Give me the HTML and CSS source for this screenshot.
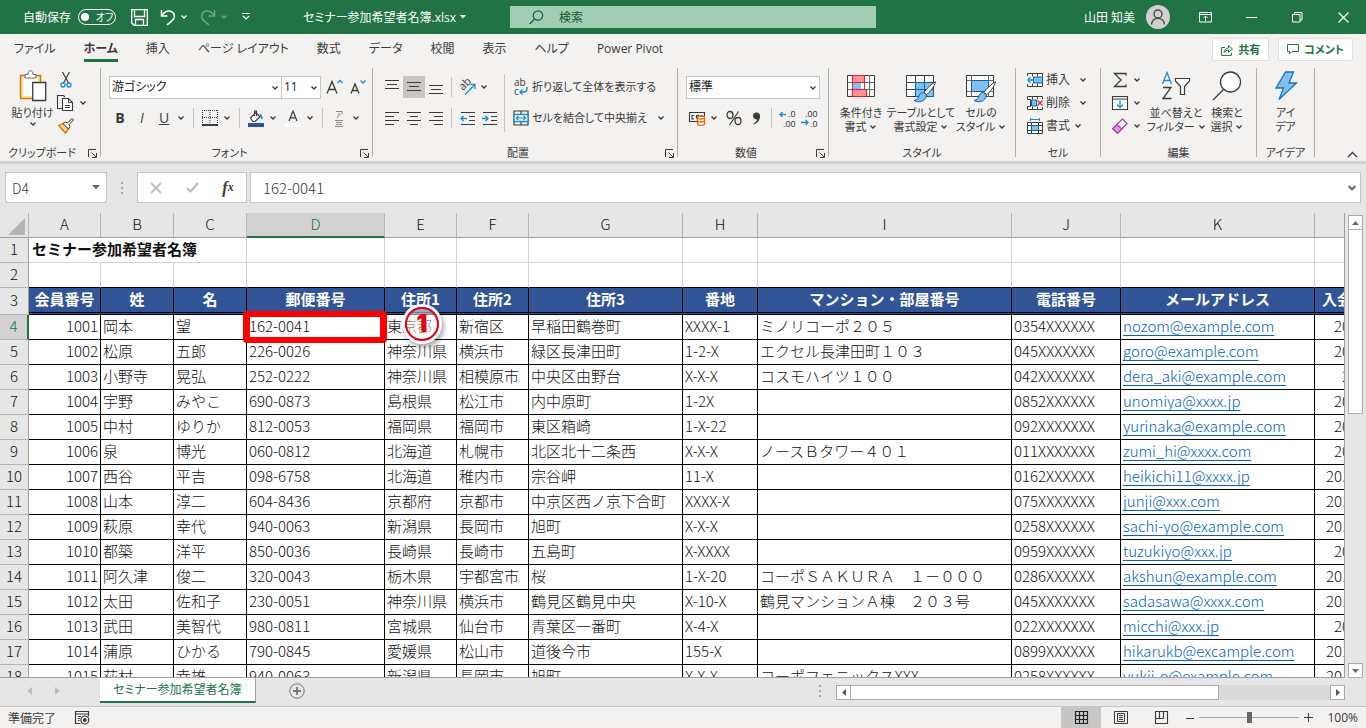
FILE: index.html
```html
<!DOCTYPE html>
<html lang="ja">
<head>
  <meta charset="UTF-8" />
  <meta name="viewport" content="width=device-width, initial-scale=1.0"/>
  <title>セミナー参加希望者名簿.xlsx</title>
  <link rel="stylesheet" href="styles.css">
</head>
<body>

  <svg class="sprite" aria-hidden="true">
    <symbol id="chev" viewBox="0 0 8 8"><path d="M1.500 2.500 4 5 6.500 2.500" fill="none" stroke="currentColor" stroke-width="1.300"/></symbol>
    <symbol id="launch" viewBox="0 0 9 9"><path d="M.5 8V.5H8M3.500 3.500 8 8M8.500 4v4.500H4" fill="none" stroke="currentColor"/></symbol>
    <symbol id="brush" viewBox="0 0 24 22"><path d="M22.500.8c-4 2-9 7-11.500 10.500l2.500 2.500C17 11 21.500 5.500 22.500.8z" fill="#fff" stroke="#3b3a39"/><path d="M10.500 11.500c-3 0-4.500 2-5 4.500-.5 2-2 3-4.500 3.500 4.500 2.500 11.500 1.500 12.500-5.500z" fill="#83beec" stroke="#0364b8"/></symbol>
  </svg>

  <header class="titlebar">
    <div class="quick">
      <span>自動保存</span>
      <button class="toggle" aria-label="自動保存"><i></i>オフ</button>
      <button class="save" aria-label="上書き保存"><svg width="17" height="17" viewBox="0 0 17 17"><path d="M.7.7h15.600v15.600H3L.7 14zM3.500.7v6.800h10V.7M4.500 16v-5.500h8V16" fill="none" stroke="#fff" stroke-width="1.300"/></svg></button>
      <button class="undo" aria-label="元に戻す"><svg width="16" height="17" viewBox="0 0 16 17"><path d="M1.500 1v6h6M1.800 6.800C4 3 7 1.500 10 2c4 .7 5.500 5 3.500 8-1.500 2.300-4 4-6.500 6" fill="none" stroke="#fff" stroke-width="1.500"/></svg></button>
      <svg class="caret"><use href="#chev"/></svg>
      <button class="redo faded" aria-label="やり直し"><svg width="16" height="17" viewBox="0 0 16 17"><path d="M14.500 1v6h-6M14.200 6.800C12 3 9 1.500 6 2 2 2.700.5 7 2.500 10 4 12.300 6.500 14 9 16" fill="none" stroke="#fff" stroke-width="1.500"/></svg></button>
      <svg class="caret faded"><use href="#chev"/></svg>
      <button class="custom" aria-label="クイック アクセス ツール バーのカスタマイズ"><svg width="8" height="8" viewBox="0 0 8 8"><path d="M0 .5h8M1 3l3 3 3-3" fill="none" stroke="#fff" stroke-width="1.200"/></svg></button>
      <span class="doc-name">セミナー参加希望者名簿.xlsx</span>
      <svg class="doc-caret" width="6" height="4" viewBox="0 0 6 4"><path d="M0 0h6L3 3.500z" fill="#fff"/></svg>
    </div>
    <label class="search">
      <svg width="15" height="15" viewBox="0 0 15 15"><circle cx="9" cy="5.500" r="4.700" fill="none" stroke="#185c37" stroke-width="1.200"/><path d="M5.500 9 .7 14" stroke="#185c37" stroke-width="1.200"/></svg>
      <input type="text" placeholder="検索" aria-label="検索">
    </label>
    <div class="window">
      <span>山田 知美</span>
      <span class="avatar"><svg width="16" height="16" viewBox="0 0 16 16"><circle cx="8" cy="5" r="4" fill="none" stroke="#444" stroke-width="1.300"/><path d="M1.500 15.500C2 11 4.500 9.300 8 9.300s6 1.700 6.500 6.200" fill="none" stroke="#444" stroke-width="1.300"/></svg></span>
      <button aria-label="リボンの表示オプション"><svg width="13" height="11" viewBox="0 0 13 11"><path d="M.5.5h12v9.500H.5zM.5 2.500h12M6.500 9V4.500M4.500 6l2-2 2 2" fill="none" stroke="#fff"/></svg></button>
      <button aria-label="最小化"><svg width="11" height="11" viewBox="0 0 11 11"><path d="M0 5.500h11" stroke="#fff"/></svg></button>
      <button aria-label="元に戻す(縮小)"><svg width="11" height="11" viewBox="0 0 11 11"><path d="M.5 2.500h7.500V10H.5zM2.500 2.500V.5H10V8H8" fill="none" stroke="#fff"/></svg></button>
      <button aria-label="閉じる"><svg width="11" height="11" viewBox="0 0 11 11"><path d="M.5.5l10 10M10.500.5l-10 10" stroke="#fff" stroke-width="1.100"/></svg></button>
    </div>
  </header>

  <nav class="tabs">
    <a href="#">ファイル</a>
    <a href="#" class="active">ホーム</a>
    <a href="#">挿入</a>
    <a href="#">ページ レイアウト</a>
    <a href="#">数式</a>
    <a href="#">データ</a>
    <a href="#">校閲</a>
    <a href="#">表示</a>
    <a href="#">ヘルプ</a>
    <a href="#">Power Pivot</a>
    <div class="share">
      <button><svg width="12" height="12" viewBox="0 0 12 12"><path d="M4 3.500H.6v7.900h9.800V8.500M3 8.500C3.500 5.500 5 4 7.500 4V1.500l4 3.500-4 3.300V6C5.500 6 4 6.800 3 8.500z" fill="none" stroke="#217346"/></svg>共有</button>
      <button><svg width="12" height="11" viewBox="0 0 12 11"><path d="M.5.5h11v7H5L2.500 10V7.500h-2z" fill="none" stroke="#217346"/></svg>コメント</button>
    </div>
  </nav>

  <section class="ribbon">
    <div class="group clipboard">
      <div class="body">
        <button class="tall">
          <svg width="28" height="32" viewBox="0 0 28 32"><path d="M1.500 5.500h20v23h-20z" fill="#ffe0a0" stroke="#d97706" stroke-width="1.500"/><path d="M4 8h15v18H4z" fill="#fff"/><path d="M6 8V4.500h3C9 2 10 .8 11.500.8S14 2 14 4.500h3V8z" fill="#fff" stroke="#6b6966"/><path d="M13.700 12.500h13v18h-13z" fill="#fff" stroke="#3b3a39" stroke-width="1.300"/></svg>
          <span>貼り付け</span>
          <svg class="caret"><use href="#chev"/></svg>
        </button>
        <div class="stack">
          <button aria-label="切り取り"><svg width="16" height="16" viewBox="0 0 16 16"><path d="M4.500 0 10.500 11M11.500 0l-6 11" stroke="#3b3a39" stroke-width="1.200"/><circle cx="5" cy="13" r="2" fill="none" stroke="#1e8bcd" stroke-width="1.300"/><circle cx="11" cy="13" r="2" fill="none" stroke="#1e8bcd" stroke-width="1.300"/></svg></button>
          <div class="split"><button aria-label="コピー"><svg width="16" height="16" viewBox="0 0 16 16"><path d="M5.500 13.500h-5V.5h6l1.500 1.500" fill="none" stroke="#3b3a39" stroke-width="1.100"/><path d="M5.500 3.500h6l4 4v8h-10z" fill="#fff" stroke="#3b3a39" stroke-width="1.100"/><path d="M11.500 3.500v4h4M8 10.500h5M8 12.500h5" fill="none" stroke="#3b3a39"/></svg></button><button class="drop" aria-label="コピーのオプション"><svg class="caret"><use href="#chev"/></svg></button></div>
          <button aria-label="書式のコピー/貼り付け"><svg width="16" height="16" viewBox="0 0 16 16"><path d="M.8 7.500 5 5.500l5.500 5.500-3 4.200z" fill="#ffd590" stroke="#d97706" stroke-width="1.300"/><path d="M3 10.500l4 4" stroke="#d97706"/><path d="M5 5.500 7.500 4l2 1 4.500-4.500 1.500 1.500L11 6.500l1 2L10.500 11z" fill="#fff" stroke="#3b3a39"/></svg></button>
        </div>
      </div>
      <div class="caption"><span>クリップボード</span><button aria-label="クリップボードの詳細"><svg width="9" height="9"><use href="#launch"/></svg></button></div>
    </div>
    <div class="divider"></div>

    <div class="group font">
      <div class="body rows">
        <div class="row">
          <span class="combo font-name"><select aria-label="フォント名"><option>游ゴシック</option></select><svg class="caret"><use href="#chev"/></svg></span>
          <span class="combo font-size"><select aria-label="フォント サイズ"><option>11</option></select><svg class="caret"><use href="#chev"/></svg></span>
          <button class="tool grow" aria-label="フォント サイズの拡大"><svg width="17" height="16" viewBox="0 0 17 16"><path d="M1 14.500 6 2.500l5 12M2.800 10.500h6.400" fill="none" stroke="#3b3a39" stroke-width="1.300"/><path d="M11.500 4 14 1.500 16.500 4" fill="none" stroke="#1e8bcd" stroke-width="1.300"/></svg></button>
          <button class="tool" aria-label="フォント サイズの縮小"><svg width="17" height="16" viewBox="0 0 17 16"><path d="M2 14.500 6 5l4 9.500M3.500 11.500h5" fill="none" stroke="#3b3a39" stroke-width="1.300"/><path d="M11.500 1.500 14 4l2.500-2.500" fill="none" stroke="#1e8bcd" stroke-width="1.300"/></svg></button>
        </div>
        <div class="row">
          <button class="tool bold">B</button>
          <button class="tool italic">I</button>
          <button class="tool under">U</button>
          <button class="drop" aria-label="下線の種類"><svg class="caret"><use href="#chev"/></svg></button>
          <i class="sep"></i>
          <button class="tool" aria-label="罫線"><svg width="16" height="16" viewBox="0 0 16 16"><path d="M.5 0v14M8 0v14M15.500 0v14M0 .5h16M0 7.500h16" stroke="#3b3a39" stroke-dasharray="1 1"/><path d="M0 15h16" stroke="#000" stroke-width="1.500"/></svg></button>
          <button class="drop" aria-label="罫線の種類"><svg class="caret"><use href="#chev"/></svg></button>
          <i class="sep"></i>
          <button class="tool" aria-label="塗りつぶしの色"><svg width="16" height="17" viewBox="0 0 16 17"><path d="M2.500 8 8 2.500l4 4.500-5 4.500H5zM6.500 6V1.500c0-1 2-1 2 0V6" fill="#fff" stroke="#3b3a39" stroke-width="1.200"/><path d="M11.500 3.500c2.500.5 3.500 2.500 3 6.500-1.500-1-2-3-2.500-5z" fill="#1e8bcd"/><path d="M0 13h16v4H0z" fill="#305496"/></svg></button>
          <button class="drop" aria-label="塗りつぶしの色の選択"><svg class="caret"><use href="#chev"/></svg></button>
          <button class="tool gap" aria-label="フォントの色"><svg width="16" height="17" viewBox="0 0 16 17"><path d="M4 11 8 1l4 10M5.300 7.800h5.400" fill="none" stroke="#3b3a39" stroke-width="1.200"/><path d="M0 13h16v4H0z" fill="#fff"/></svg></button>
          <button class="drop" aria-label="フォントの色の選択"><svg class="caret"><use href="#chev"/></svg></button>
          <i class="sep"></i>
          <button class="tool ruby" aria-label="ふりがなの表示"><svg width="12" height="17" viewBox="0 0 12 17"><path d="M3 1.500h6.500C9.500 3 8.500 4 7.300 4.700M6 3c0 2.500-.5 4-2.500 5" fill="none" stroke="#8a8886"/><path d="M2 10.500h8M3 12.500h6M3 14.500h6M2 16.500h8" stroke="#8a8886"/></svg></button>
          <button class="drop" aria-label="ふりがなのオプション"><svg class="caret"><use href="#chev"/></svg></button>
        </div>
      </div>
      <div class="caption"><span>フォント</span><button aria-label="フォントの設定"><svg width="9" height="9"><use href="#launch"/></svg></button></div>
    </div>
    <div class="divider"></div>

    <div class="group align">
      <div class="body">
        <div class="rows">
          <div class="row">
            <button class="tool" aria-label="上揃え"><svg width="14" height="14" viewBox="0 0 14 14"><path d="M0 .5h14M2 4.500h10M0 8.500h14" stroke="#3b3a39"/></svg></button>
            <button class="tool on" aria-label="上下中央揃え"><svg width="14" height="14" viewBox="0 0 14 14"><path d="M0 2.500h14M2 6.500h10M0 10.500h14" stroke="#3b3a39"/></svg></button>
            <button class="tool" aria-label="下揃え"><svg width="14" height="14" viewBox="0 0 14 14"><path d="M0 5.500h14M2 9.500h10M0 13.500h14" stroke="#3b3a39"/></svg></button>
            <i class="sep"></i>
            <button class="tool orient" aria-label="方向"><svg width="17" height="17" viewBox="0 0 17 17"><text transform="translate(4 12) rotate(-45)" font-size="11" fill="#3b3a39">ab</text><path d="M6 15.500 15.500 6M11.500 5.500h4.500V10" fill="none" stroke="#1e8bcd" stroke-width="1.300"/></svg></button>
            <button class="drop" aria-label="方向の選択"><svg class="caret"><use href="#chev"/></svg></button>
          </div>
          <div class="row">
            <button class="tool" aria-label="左揃え"><svg width="14" height="14" viewBox="0 0 14 14"><path d="M0 1.500h14M0 5.500h9M0 9.500h14M0 13.500h9" stroke="#3b3a39"/></svg></button>
            <button class="tool" aria-label="中央揃え"><svg width="14" height="14" viewBox="0 0 14 14"><path d="M0 1.500h14M3 5.500h8M0 9.500h14M3 13.500h8" stroke="#3b3a39"/></svg></button>
            <button class="tool" aria-label="右揃え"><svg width="14" height="14" viewBox="0 0 14 14"><path d="M0 1.500h14M5 5.500h9M0 9.500h14M5 13.500h9" stroke="#3b3a39"/></svg></button>
            <i class="sep"></i>
            <button class="tool" aria-label="インデントを減らす"><svg width="15" height="14" viewBox="0 0 15 14"><path d="M1 1.500h14M9 5.500h6M9 9.500h6M1 13.500h14" stroke="#3b3a39"/><path d="M7 7.500H1M3.500 5 1 7.500 3.500 10" fill="none" stroke="#1e8bcd" stroke-width="1.400"/></svg></button>
            <button class="tool" aria-label="インデントを増やす"><svg width="15" height="14" viewBox="0 0 15 14"><path d="M1 1.500h14M9 5.500h6M9 9.500h6M1 13.500h14" stroke="#3b3a39"/><path d="M0 7.500h6M3.500 5 6 7.500 3.500 10" fill="none" stroke="#1e8bcd" stroke-width="1.400"/></svg></button>
          </div>
        </div>
        <i class="sep long"></i>
        <div class="rows">
          <div class="row">
            <button class="wide"><svg width="16" height="17" viewBox="0 0 16 17"><text x="1" y="7" font-size="10" fill="#3b3a39">ab</text><text x="1" y="16" font-size="10" fill="#3b3a39">c</text><path d="M14 8v1.500c0 2.500-1.500 3.500-3.500 3.500H7M9.500 10.500 7 13l2.500 2.500" fill="none" stroke="#1e8bcd" stroke-width="1.400"/></svg>折り返して全体を表示する</button>
          </div>
          <div class="row">
            <button class="wide"><svg width="16" height="16" viewBox="0 0 16 16"><path d="M1 1h14v14H1zM8 1v3M8 12v3" fill="none" stroke="#3b3a39" stroke-width="1.200"/><path d="M1 4.500h14v7H1z" fill="#fff" stroke="#1e8bcd" stroke-width="1.300"/><path d="M3 8h10M5.500 5.800 3.300 8l2.200 2.200M10.500 5.800 12.700 8l-2.200 2.200" fill="none" stroke="#1e8bcd" stroke-width="1.200"/></svg>セルを結合して中央揃え</button>
            <button class="drop end" aria-label="結合の種類"><svg class="caret"><use href="#chev"/></svg></button>
          </div>
        </div>
      </div>
      <div class="caption"><span>配置</span><button aria-label="配置の設定"><svg width="9" height="9"><use href="#launch"/></svg></button></div>
    </div>
    <div class="divider"></div>

    <div class="group number">
      <div class="body rows">
        <div class="row">
          <span class="combo num-format"><select aria-label="数値の書式"><option>標準</option></select><svg class="caret"><use href="#chev"/></svg></span>
        </div>
        <div class="row">
          <button class="tool" aria-label="通貨表示形式"><svg width="17" height="15" viewBox="0 0 17 15"><path d="M8 10.500H.5v-9h15V5M5 4.500H3v3.500h2M9.500 7.500V4.500h-2v3M12 6V4.500h1.500" fill="none" stroke="#3b3a39" stroke-width="1.100"/><path d="M8.500 6.500v6c0 2.500 7 2.500 7 0v-6" fill="#fff" stroke="#d9680c" stroke-width="1.300"/><ellipse cx="12" cy="6.500" rx="3.500" ry="1.500" fill="#fff" stroke="#d9680c" stroke-width="1.300"/><path d="M8.500 9.500c0 2 7 2 7 0" fill="none" stroke="#d9680c" stroke-width="1.300"/></svg></button>
          <button class="drop" aria-label="通貨の選択"><svg class="caret"><use href="#chev"/></svg></button>
          <button class="tool percent" aria-label="パーセント スタイル"><svg width="16" height="16" viewBox="0 0 16 16"><ellipse cx="4" cy="5" rx="3" ry="3.500" fill="none" stroke="#3b3a39" stroke-width="1.300"/><ellipse cx="12" cy="11" rx="3" ry="3.500" fill="none" stroke="#3b3a39" stroke-width="1.300"/><path d="M12.500 1.500 3.500 15" stroke="#3b3a39" stroke-width="1.200"/></svg></button>
          <button class="tool" aria-label="桁区切りスタイル"><svg width="9" height="13" viewBox="0 0 9 13"><path d="M1 4a3.500 3.500 0 1 1 7 0c0 4-2 7-6.500 8.500v-1c2.500-1 3.500-2.500 3.500-4.200C2.500 7.800 1 6 1 4z" fill="#3b3a39"/></svg></button>
          <i class="sep"></i>
          <button class="tool" aria-label="小数点以下の表示桁数を増やす"><svg width="17" height="17" viewBox="0 0 17 17"><path d="M7 4.500H1M3.500 2 1 4.500 3.500 7" fill="none" stroke="#1e8bcd" stroke-width="1.300"/><text class="digits" x="9" y="7">.0</text><text class="digits" x="4" y="17">.00</text></svg></button>
          <button class="tool" aria-label="小数点以下の表示桁数を減らす"><svg width="17" height="17" viewBox="0 0 17 17"><text class="digits" x="4" y="7">.00</text><text class="digits" x="9" y="17">.0</text><path d="M0 12.500h7M4.500 10 7 12.500 4.500 15" fill="none" stroke="#1e8bcd" stroke-width="1.300"/></svg></button>
        </div>
      </div>
      <div class="caption"><span>数値</span><button aria-label="数値の設定"><svg width="9" height="9"><use href="#launch"/></svg></button></div>
    </div>
    <div class="divider"></div>

    <div class="group styles">
      <div class="body">
        <button class="tall w48">
          <svg width="30" height="32" viewBox="0 0 30 32"><path d="M1.500 5.500h27v21h-27z" fill="#fff" stroke="#3b3a39"/><path d="M1.500 12.500h27M1.500 19.500h27M6.500 5v22M18.500 5v22M23.500 5v22" stroke="#6b6966"/><path d="M6.500 5.500h12v7h-12zM6.500 19.500h14v7h-14z" fill="#ff9198" stroke="#e8202a" stroke-width="1.200"/><path d="M7 13h8v6H7z" fill="#83beec"/></svg>
          <span>条件付き<br>書式 <svg class="caret"><use href="#chev"/></svg></span>
        </button>
        <button class="tall w64">
          <svg width="32" height="32" viewBox="0 0 32 32"><path d="M1.500 5.500h27v21h-27z" fill="#fff" stroke="#3b3a39"/><path d="M10.500 12.500h18v14h-18z" fill="#83beec"/><path d="M1.500 12.500h27M1.500 19.500h9M10.500 5v22M19.500 5v8" stroke="#3b3a39"/><path d="M10.500 12.500h18v14h-18zM10.500 19.500h18M19.500 12.500v14" fill="none" stroke="#0364b8"/><svg x="8" y="11" width="24" height="22"><use href="#brush"/></svg></svg>
          <span>テーブルとして<br>書式設定 <svg class="caret"><use href="#chev"/></svg></span>
        </button>
        <button class="tall w48">
          <svg width="32" height="32" viewBox="0 0 32 32"><path d="M1.500 5.500h27v21h-27z" fill="#fff" stroke="#3b3a39"/><path d="M1.500 10.500h27M1.500 21.500h27M6.500 5v22M23.500 5v22" stroke="#6b6966"/><path d="M6.500 10.500h17v11h-17z" fill="#83beec" stroke="#0364b8"/><svg x="8" y="11" width="24" height="22"><use href="#brush"/></svg></svg>
          <span>セルの<br>スタイル <svg class="caret"><use href="#chev"/></svg></span>
        </button>
      </div>
      <div class="caption"><span>スタイル</span></div>
    </div>
    <div class="divider"></div>

    <div class="group cells">
      <div class="body stack">
        <div class="split"><button class="wide"><svg width="16" height="16" viewBox="0 0 16 16"><path d="M.5 4V1.500h15v13H.5V12M5.500 1.500v3M10.500 1.500v3M5.500 11.500v3M10.500 11.500v3" fill="#fff" stroke="#3b3a39"/><path d="M6.500 5h9v6h-9z" fill="#83beec" stroke="#0364b8"/><path d="M7 8H.8M3.500 5.200.8 8l2.700 2.800" fill="none" stroke="#1e8bcd" stroke-width="1.300"/></svg>挿入</button><button class="drop end" aria-label="挿入の種類"><svg class="caret"><use href="#chev"/></svg></button></div>
        <div class="split"><button class="wide"><svg width="16" height="16" viewBox="0 0 16 16"><path d="M15.500 4V1.500H.5v3h3v7h-3v3h15V12M5.500 1.500v3M10.500 1.500v3M5.500 11.500v3M10.500 11.500v3" fill="#fff" stroke="#3b3a39"/><path d="M4.500 5h5v6h-5z" fill="#83beec" stroke="#0364b8"/><path d="M10.500 5.500l5 5M15.500 5.500l-5 5" stroke="#e8202a" stroke-width="1.400"/></svg>削除</button><button class="drop end" aria-label="削除の種類"><svg class="caret"><use href="#chev"/></svg></button></div>
        <div class="split"><button class="wide"><svg width="16" height="16" viewBox="0 0 16 16"><path d="M.5 4.500h15v11H.5zM.5 7.500h15M.5 12.500h15M4.500 4v12M11.500 4v12" fill="#fff" stroke="#3b3a39"/><path d="M4.500 7.500h7v5h-7z" fill="#83beec" stroke="#0364b8"/><path d="M3.500 0v3M12.500 0v3M3.500 1.500h9" stroke="#1e8bcd"/></svg>書式</button><button class="drop near" aria-label="書式の種類"><svg class="caret"><use href="#chev"/></svg></button></div>
      </div>
      <div class="caption"><span>セル</span></div>
    </div>
    <div class="divider"></div>

    <div class="group editing">
      <div class="body">
        <div class="stack">
          <div class="split"><button aria-label="合計"><svg width="16" height="16" viewBox="0 0 16 16"><path d="M14 3.500V1.500H2.500L9 8l-6.500 6.500H14v-2" fill="none" stroke="#3b3a39" stroke-width="1.300"/></svg></button><button class="drop" aria-label="合計の種類"><svg class="caret"><use href="#chev"/></svg></button></div>
          <div class="split"><button aria-label="フィル"><svg width="16" height="16" viewBox="0 0 16 16"><path d="M.5 1.500h15v13H.5zM.5 4h15" fill="#fff" stroke="#3b3a39" stroke-width="1.100"/><path d="M8 5.500V12M5 9.500l3 3 3-3" fill="none" stroke="#1e8bcd" stroke-width="1.300"/></svg></button><button class="drop" aria-label="フィルの種類"><svg class="caret"><use href="#chev"/></svg></button></div>
          <div class="split"><button aria-label="クリア"><svg width="16" height="16" viewBox="0 0 16 16"><path d="M10.500 1 15 5.500 6 15H5L.7 10.500z" fill="#fff" stroke="#a33da8" stroke-width="1.200"/><path d="M5 6.500 9.800 11 6 15H5L.7 10.500z" fill="#d79ad9" stroke="#a33da8" stroke-width="1.200"/></svg></button><button class="drop" aria-label="クリアの種類"><svg class="caret"><use href="#chev"/></svg></button></div>
        </div>
        <button class="tall w54">
          <svg width="30" height="32" viewBox="0 0 30 32"><path d="M1.500 14 6 2.500 10.500 14M3 10.500h6" fill="none" stroke="#1e8bcd" stroke-width="1.300"/><path d="M2 17.500h8L2 28.500h8.500" fill="none" stroke="#3b3a39" stroke-width="1.300"/><path d="M14.500 8.500h14V11l-5 5.500v8h-4v-8l-5-5.500z" fill="#fff" stroke="#3b3a39" stroke-width="1.200"/></svg>
          <span>並べ替えと<br>フィルター <svg class="caret"><use href="#chev"/></svg></span>
        </button>
        <button class="tall find">
          <svg width="30" height="32" viewBox="0 0 30 32"><circle cx="18.500" cy="12" r="10" fill="#fff" stroke="#3b3a39" stroke-width="1.300"/><path d="M11.500 19.500 1 30" stroke="#3b3a39" stroke-width="1.300"/></svg>
          <span>検索と<br>選択 <svg class="caret"><use href="#chev"/></svg></span>
        </button>
      </div>
      <div class="caption"><span>編集</span></div>
    </div>
    <div class="divider"></div>

    <div class="group ideas">
      <div class="body">
        <button class="tall">
          <svg width="24" height="32" viewBox="0 0 24 32"><path d="M11.500 2h8l-4.500 11h7.500L5 29.500 9.500 18H2z" fill="#83beec" stroke="#0f78d0" stroke-width="1.300"/></svg>
          <span>アイ<br>デア</span>
        </button>
      </div>
      <div class="caption"><span>アイデア</span></div>
    </div>
    <div class="divider"></div>
    <button class="collapse" aria-label="リボンを折りたたむ"><svg width="11" height="7" viewBox="0 0 11 7"><path d="M1 6l4.500-4.500L10 6" fill="none" stroke="#3b3a39" stroke-width="1.300"/></svg></button>
  </section>

  <section class="formula">
    <label class="name-box"><input type="text" value="D4" aria-label="名前ボックス"><svg width="8" height="5" viewBox="0 0 8 5"><path d="M0 0h8L4 4.500z" fill="#6b6966"/></svg></label>
    <span class="grip"><i></i><i></i><i></i></span>
    <div class="fx">
      <button aria-label="キャンセル"><svg width="12" height="12" viewBox="0 0 12 12"><path d="M1 1l10 10M11 1 1 11" stroke="#bdbdbd" stroke-width="2"/></svg></button>
      <button aria-label="入力"><svg width="13" height="11" viewBox="0 0 13 11"><path d="M1 6l3.500 3.500L12 1" fill="none" stroke="#bdbdbd" stroke-width="2.200"/></svg></button>
      <button aria-label="関数の挿入"><em>f</em><em class="x">x</em></button>
    </div>
    <label class="formula-box"><input type="text" value="162-0041" aria-label="数式バー"><svg width="8" height="6" viewBox="0 0 8 6"><path d="M.7 1 4 4.500 7.300 1" fill="none" stroke="#6b6966" stroke-width="2"/></svg></label>
  </section>

  <main class="workspace">
    <div class="sheet">
      <table>
        <colgroup>
          <col class="c-row"><col class="c-a"><col class="c-b"><col class="c-b"><col class="c-d"><col class="c-a"><col class="c-a"><col class="c-g"><col class="c-h"><col class="c-i"><col class="c-j"><col class="c-k"><col class="c-l">
        </colgroup>
        <thead>
          <tr><th class="corner"><svg width="17" height="17" viewBox="0 0 17 17"><path d="M17 0v17H0z" fill="#b4b4b4"/></svg></th><th>A</th><th>B</th><th>C</th><th class="picked">D</th><th>E</th><th>F</th><th>G</th><th>H</th><th>I</th><th>J</th><th>K</th><th></th></tr>
        </thead>
        <tbody>
          <tr class="plain"><th>1</th><td colspan="3" class="title">セミナー参加希望者名簿</td><td></td><td></td><td></td><td></td><td></td><td></td><td></td><td></td><td></td></tr>
          <tr class="plain last"><th>2</th><td></td><td></td><td></td><td></td><td></td><td></td><td></td><td></td><td></td><td></td><td></td><td></td></tr>
          <tr class="heads"><th>3</th><td>会員番号</td><td>姓</td><td>名</td><td>郵便番号</td><td>住所1</td><td>住所2</td><td>住所3</td><td>番地</td><td>マンション・部屋番号</td><td>電話番号</td><td>メールアドレス</td><td>入会年月日</td></tr>
          <tr><th class="picked">4</th><td>1001</td><td>岡本</td><td>望</td><td class="selected">162-0041<i class="frame"></i></td><td class="noted">東京都<b class="badge">1</b></td><td>新宿区</td><td>早稲田鶴巻町</td><td>XXXX-1</td><td>ミノリコーポ２０５</td><td>0354XXXXXX</td><td><a href="#">nozom@example.com</a></td><td>2018/4/10</td></tr>
          <tr><th>5</th><td>1002</td><td>松原</td><td>五郎</td><td>226-0026</td><td>神奈川県</td><td>横浜市</td><td>緑区長津田町</td><td>1-2-X</td><td>エクセル長津田町１０３</td><td>045XXXXXXX</td><td><a href="#">goro@example.com</a></td><td>2018/4/12</td></tr>
          <tr><th>6</th><td>1003</td><td>小野寺</td><td>晃弘</td><td>252-0222</td><td>神奈川県</td><td>相模原市</td><td>中央区由野台</td><td>X-X-X</td><td>コスモハイツ１００</td><td>042XXXXXXX</td><td><a href="#">dera_aki@example.com</a></td><td>2018/5/1</td></tr>
          <tr><th>7</th><td>1004</td><td>宇野</td><td>みやこ</td><td>690-0873</td><td>島根県</td><td>松江市</td><td>内中原町</td><td>1-2X</td><td></td><td>0852XXXXXX</td><td><a href="#">unomiya@xxxx.jp</a></td><td>2018/5/15</td></tr>
          <tr><th>8</th><td>1005</td><td>中村</td><td>ゆりか</td><td>812-0053</td><td>福岡県</td><td>福岡市</td><td>東区箱崎</td><td>1-X-22</td><td></td><td>092XXXXXXX</td><td><a href="#">yurinaka@example.com</a></td><td>2018/6/20</td></tr>
          <tr><th>9</th><td>1006</td><td>泉</td><td>博光</td><td>060-0812</td><td>北海道</td><td>札幌市</td><td>北区北十二条西</td><td>X-X-X</td><td>ノースＢタワー４０１</td><td>011XXXXXXX</td><td><a href="#">zumi_hi@xxxx.com</a></td><td>2018/7/11</td></tr>
          <tr><th>10</th><td>1007</td><td>西谷</td><td>平吉</td><td>098-6758</td><td>北海道</td><td>稚内市</td><td>宗谷岬</td><td>11-X</td><td></td><td>0162XXXXXX</td><td><a href="#">heikichi11@xxxx.jp</a></td><td>2018/10/10</td></tr>
          <tr><th>11</th><td>1008</td><td>山本</td><td>淳二</td><td>604-8436</td><td>京都府</td><td>京都市</td><td>中京区西ノ京下合町</td><td>XXXX-X</td><td></td><td>075XXXXXXX</td><td><a href="#">junji@xxx.com</a></td><td>2018/10/21</td></tr>
          <tr><th>12</th><td>1009</td><td>萩原</td><td>幸代</td><td>940-0063</td><td>新潟県</td><td>長岡市</td><td>旭町</td><td>X-X-X</td><td></td><td>0258XXXXXX</td><td><a href="#">sachi-yo@example.com</a></td><td>2018/11/15</td></tr>
          <tr><th>13</th><td>1010</td><td>都築</td><td>洋平</td><td>850-0036</td><td>長崎県</td><td>長崎市</td><td>五島町</td><td>X-XXXX</td><td></td><td>0959XXXXXX</td><td><a href="#">tuzukiyo@xxx.jp</a></td><td>2018/12/1</td></tr>
          <tr><th>14</th><td>1011</td><td>阿久津</td><td>俊二</td><td>320-0043</td><td>栃木県</td><td>宇都宮市</td><td>桜</td><td>1-X-20</td><td>コーポＳＡＫＵＲＡ　１－０００</td><td>0286XXXXXX</td><td><a href="#">akshun@example.com</a></td><td>2018/12/10</td></tr>
          <tr><th>15</th><td>1012</td><td>太田</td><td>佐和子</td><td>230-0051</td><td>神奈川県</td><td>横浜市</td><td>鶴見区鶴見中央</td><td>X-10-X</td><td>鶴見マンションＡ棟　２０３号</td><td>045XXXXXXX</td><td><a href="#">sadasawa@xxxx.com</a></td><td>2018/12/20</td></tr>
          <tr><th>16</th><td>1013</td><td>武田</td><td>美智代</td><td>980-0811</td><td>宮城県</td><td>仙台市</td><td>青葉区一番町</td><td>X-4-X</td><td></td><td>022XXXXXXX</td><td><a href="#">micchi@xxx.jp</a></td><td>2019/1/15</td></tr>
          <tr><th>17</th><td>1014</td><td>蒲原</td><td>ひかる</td><td>790-0845</td><td>愛媛県</td><td>松山市</td><td>道後今市</td><td>155-X</td><td></td><td>0899XXXXXX</td><td><a href="#">hikarukb@excample.com</a></td><td>2019/10/10</td></tr>
          <tr><th>18</th><td>1015</td><td>荻村</td><td>幸雄</td><td>940-0063</td><td>新潟県</td><td>長岡市</td><td>旭町</td><td>X-X-X</td><td>コーポフェニックスXXX</td><td>0258XXXXXX</td><td><a href="#">yukii-o@example.com</a></td><td>2019/10/15</td></tr>
        </tbody>
      </table>
    </div>
    <div class="vscroll">
      <button aria-label="上へスクロール"><svg width="7" height="4" viewBox="0 0 7 4"><path d="M0 4h7L3.500 0z" fill="#6b6966"/></svg></button>
      <div class="thumb"></div>
      <button aria-label="下へスクロール"><svg width="7" height="4" viewBox="0 0 7 4"><path d="M0 0h7L3.500 4z" fill="#6b6966"/></svg></button>
    </div>
  </main>

  <div class="sheet-tabs">
    <div class="nav">
      <button aria-label="前のシート"><svg width="5" height="8" viewBox="0 0 5 8"><path d="M5 0v8L0 4z" fill="#bdbdbd"/></svg></button>
      <button aria-label="次のシート"><svg width="5" height="8" viewBox="0 0 5 8"><path d="M0 0v8l5-4z" fill="#bdbdbd"/></svg></button>
    </div>
    <a href="#" class="sheet-tab">セミナー参加希望者名簿</a>
    <button class="add" aria-label="新しいシート"><svg width="16" height="16" viewBox="0 0 16 16"><circle cx="8" cy="8" r="7.200" fill="none" stroke="#777"/><path d="M8 4v8M4 8h8" stroke="#777" stroke-width="1.800"/></svg></button>
    <span class="grip"><i></i><i></i><i></i></span>
    <div class="hscroll">
      <button aria-label="左へスクロール"><svg width="4" height="7" viewBox="0 0 4 7"><path d="M4 0v7L0 3.500z" fill="#555"/></svg></button>
      <div class="thumb"></div>
      <button aria-label="右へスクロール"><svg width="4" height="7" viewBox="0 0 4 7"><path d="M0 0v7l4-3.500z" fill="#555"/></svg></button>
    </div>
  </div>

  <footer class="status">
    <span>準備完了</span>
    <button class="macro" aria-label="マクロの記録"><svg width="15" height="14" viewBox="0 0 15 14"><path d="M5.500 12.500H.5V.5h13v5M.5 3h13M3 5.500h3M3 7.500h2M3 9.500h1.500" fill="none" stroke="#3b3a39" stroke-width="1.200"/><circle cx="9.800" cy="9" r="4" fill="none" stroke="#3b3a39" stroke-width="1.200"/><circle cx="9.800" cy="9" r="2" fill="#3b3a39"/></svg></button>
    <div class="views">
      <button class="on" aria-label="標準"><svg width="13" height="13" viewBox="0 0 13 13"><path d="M.5.500h12v12H.5zM.5 4.500h12M.5 8.500h12M4.500.5v12M8.500.5v12" fill="none" stroke="#222" stroke-width="1.100"/></svg></button>
      <button aria-label="ページ レイアウト"><svg width="14" height="13" viewBox="0 0 14 13"><path d="M.5.500h13v12H.5zM3.500 2.500h7v8h-7zM5 4.500h4M5 6.500h4M5 8.500h4" fill="none" stroke="#3b3a39"/></svg></button>
      <button aria-label="改ページ プレビュー"><svg width="13" height="13" viewBox="0 0 13 13"><path d="M.5.500h12v12H.5zM4.500.5v7M8.500.5v7M.5 7.500h8" fill="none" stroke="#3b3a39" stroke-width="1.100"/></svg></button>
    </div>
    <div class="zoom">
      <button aria-label="縮小"><svg width="8" height="8" viewBox="0 0 8 8"><path d="M0 4.500h8" stroke="#3b3a39"/></svg></button>
      <input type="range" min="0" max="100" value="50" aria-label="ズーム">
      <button aria-label="拡大"><svg width="9" height="9" viewBox="0 0 9 9"><path d="M0 4.500h9M4.500 0v9" stroke="#3b3a39"/></svg></button>
      <span>100%</span>
    </div>
  </footer>

</body>
</html>
```
FILE: styles.css
```css
* {
  box-sizing: border-box;
}

body {
  margin: 0;
  height: 100vh;
  display: flex;
  flex-direction: column;
  overflow: hidden;
  font-family: "Open Sans", "Noto Sans CJK JP", sans-serif;
  font-feature-settings: "palt";
  font-size: 12px;
  color: #3b3a39;
  background: #e6e6e6;
}

button {
  display: flex;
  align-items: center;
  justify-content: center;
  padding: 0;
  border: none;
  background: none;
  font: inherit;
  font-feature-settings: inherit;
  color: inherit;
  white-space: nowrap;
}

button:hover {
  background-color: #d2d0ce;
}

input, select {
  font: inherit;
  font-feature-settings: inherit;
  color: inherit;
  border: none;
  background: none;
  outline: none;
  padding: 0;
  min-width: 0;
}

a {
  color: inherit;
  text-decoration: none;
}

svg {
  flex: none;
  overflow: visible;
}

.sprite {
  position: absolute;
  width: 0;
  height: 0;
}

.caret {
  width: 8px;
  height: 8px;
}

/* title bar */
.titlebar {
  flex: none;
  height: 34px;
  display: grid;
  grid-template-columns: 510px minmax(200px, 366px) 1fr;
  align-items: center;
  background: #217346;
  color: #fff;
}

.titlebar button:hover {
  background-color: #185c37;
}

.quick {
  display: flex;
  align-items: center;
  padding-left: 23px;
}

.faded {
  opacity: 0.35;
}

.toggle {
  width: 38px;
  height: 16px;
  margin-left: 7px;
  gap: 7px;
  border: 1px solid #fff;
  border-radius: 8px;
  font-size: 10px;
  line-height: 12px;
}

.toggle i {
  width: 8px;
  height: 8px;
  border-radius: 50%;
  background: #fff;
}

.save {
  margin-left: 15px;
}

.undo {
  margin: 0 4px 0 12px;
}

.redo {
  margin: 0 4px 0 12px;
}

.custom {
  margin-left: 14px;
}

.doc-name {
  margin-left: 53px;
}

.doc-caret {
  margin-left: 4px;
}

.search {
  display: flex;
  align-items: center;
  gap: 15px;
  height: 22px;
  padding-left: 19px;
  background: #a0cdb4;
}

.search input {
  flex: 1;
}

.search input::placeholder {
  color: #0f5a2f;
  opacity: 1;
}

.window {
  display: flex;
  align-items: center;
  justify-content: flex-end;
}

.window button {
  width: 46px;
  height: 34px;
}

.avatar {
  width: 24px;
  height: 24px;
  margin: 0 12px 0 11px;
  border-radius: 50%;
  background: #d2d0ce;
  display: flex;
  align-items: center;
  justify-content: center;
}

/* ribbon tabs */
.tabs {
  flex: none;
  height: 32px;
  display: flex;
  gap: 28px;
  padding: 0 13px 0 14px;
  background: #f3f2f1;
  line-height: 30px;
}

.tabs a {
  height: 28px;
  white-space: nowrap;
}

.tabs .active {
  font-weight: bold;
  border-bottom: 3px solid #217346;
}

.share {
  display: flex;
  gap: 9px;
  margin-left: auto;
  padding-top: 4px;
}

.share button {
  height: 23px;
  gap: 5px;
  padding: 0 8px;
  border: 1px solid #e1dfdd;
  border-radius: 2px;
  background: #fff;
  color: #217346;
  font-weight: bold;
  font-size: 11px;
}

/* ribbon */
.ribbon {
  flex: none;
  height: 98px;
  display: flex;
  background: #f3f2f1;
  border-bottom: 3px solid #d2d0ce;
  line-height: 14px;
}

.divider {
  width: 1px;
  margin: 2px 0 4px;
  background: #b3b0ad;
}

.group {
  flex: none;
  display: flex;
  flex-direction: column;
}

.body {
  flex: 1;
  display: flex;
}

.caption {
  position: relative;
  height: 16px;
  text-align: center;
  font-size: 11px;
  line-height: 16px;
}

.caption button {
  position: absolute;
  right: 3px;
  top: 4px;
}

.rows {
  display: flex;
  flex-direction: column;
  gap: 9px;
  padding-top: 10px;
}

.row {
  display: flex;
  align-items: center;
  height: 22px;
}

.stack {
  display: flex;
  flex-direction: column;
  padding-top: 2px;
}

.stack > * {
  height: 23px;
}

.split {
  display: flex;
  align-items: center;
}

.tool {
  width: 22px;
  height: 22px;
}

.tool.on {
  background: #c8c6c4;
}

.drop {
  width: 12px;
  height: 22px;
}

.sep {
  width: 1px;
  height: 20px;
  margin: 0 5px 0 6px;
  background: #c8c6c4;
}

.wide {
  gap: 3px;
  height: 22px;
}

.tall {
  flex-direction: column;
  justify-content: flex-start;
  padding-top: 4px;
  height: 72px;
  font-size: 11px;
}

.tall > span {
  margin-top: 4px;
}

.w48 {
  width: 48px;
}

.w54 {
  width: 54px;
}

.w64 {
  width: 64px;
}

.combo {
  position: relative;
  height: 23px;
  border: 1px solid #c8c6c4;
  background: #fff;
}

.combo select {
  appearance: none;
  width: 100%;
  height: 21px;
  padding-left: 2px;
  color: #222;
}

.combo .caret {
  position: absolute;
  right: 2px;
  top: 7px;
  pointer-events: none;
}

.clipboard {
  width: 100px;
}

.clipboard .body {
  padding-left: 8px;
}

.clipboard .tall {
  width: 49px;
}

.clipboard .stack > button {
  width: 18px;
}

.clipboard .split .drop {
  margin-left: 4px;
}

.clipboard .caption {
  padding-right: 16px;
}

.font {
  width: 271px;
}

.font .body {
  padding-left: 8px;
}

.font .caption, .align .caption, .number .caption {
  padding-right: 14px;
}

.font-name {
  width: 173px;
}

.font-size {
  width: 40px;
  margin-left: -1px;
}

.grow {
  margin: 0 1px 0 2px;
}

.bold, .italic, .under {
  font-size: 14px;
}

.bold {
  font-weight: bold;
}

.italic {
  font-style: italic;
}

.under {
  text-decoration: underline;
}

.gap {
  margin-left: 3px;
}

.align {
  width: 304px;
}

.align .body {
  padding-left: 8px;
}

.align .sep {
  margin: 0 4px;
}

.align .sep.long {
  height: 58px;
  margin: 8px 8px 0 4px;
}

.align .wide {
  font-size: 11px;
}

.align .end {
  margin-left: 8px;
}

.number {
  width: 150px;
}

.number .body {
  padding-left: 8px;
}

.number .sep {
  margin: 0 4px;
}

.num-format {
  width: 134px;
}

.percent {
  margin-left: 3px;
}

.digits {
  font-family: "Liberation Sans", sans-serif;
  font-size: 9px;
  fill: #3b3a39;
}

.styles {
  width: 186px;
}

.styles .body {
  gap: 4px;
  padding: 0 8px;
}

.cells {
  width: 84px;
}

.cells .body {
  padding-left: 11px;
}

.cells .end {
  margin-left: 7px;
}

.cells .near {
  margin-left: 2px;
}

.editing {
  width: 155px;
}

.editing .body {
  padding-left: 11px;
}

.editing .drop {
  margin-left: 3px;
}

.editing .w54 {
  margin-left: 6px;
}

.find {
  width: 48px;
}

.ideas {
  width: 57px;
}

.ideas .tall {
  flex: 1;
}

.collapse {
  margin: auto 8px 3px auto;
}

/* formula bar */
.formula {
  flex: none;
  display: flex;
  padding: 8px 5px 10px;
  font-size: 14px;
}

.formula > * {
  height: 31px;
}

.name-box, .fx, .formula-box {
  display: flex;
  align-items: center;
  border: 1px solid #c6c6c6;
  background: #fff;
}

.name-box {
  width: 102px;
  padding: 0 6px;
}

.name-box input, .formula-box input {
  flex: 1;
  font-family: "Noto Sans CJK JP", sans-serif;
  font-weight: 300;
}

.grip {
  display: flex;
  flex-direction: column;
  align-items: center;
  justify-content: center;
  gap: 3px;
  width: 30px;
}

.grip i {
  width: 2px;
  height: 2px;
  background: #a6a6a6;
}

.fx {
  width: 110px;
  margin-right: 3px;
}

.fx button {
  flex: 1;
  height: 29px;
}

.fx em {
  font-family: "Liberation Serif", serif;
  font-weight: bold;
  font-size: 16px;
}

.fx .x {
  font-size: 12px;
}

.formula-box {
  flex: 1;
  padding: 0 4px 0 12px;
  font-size: 15px;
}

/* worksheet */
.workspace {
  flex: 1;
  min-height: 0;
  display: flex;
}

.sheet {
  flex: 1;
  min-width: 0;
  overflow: hidden;
  border-right: 1px solid #9f9f9f;
  border-bottom: 1px solid #9f9f9f;
}

table {
  table-layout: fixed;
  width: 1px;
  border-collapse: separate;
  border-spacing: 0;
  background: #fff;
  color: #111;
  font-family: "Noto Sans CJK JP", sans-serif;
  font-feature-settings: normal;
  font-weight: 300;
  font-size: 15px;
  line-height: 22px;
}

.c-row { width: 29px; }
.c-a { width: 72px; }
.c-b { width: 73px; }
.c-d { width: 138px; }
.c-g { width: 154px; }
.c-h { width: 75px; }
.c-i { width: 254px; }
.c-j { width: 109px; }
.c-k { width: 194px; }
.c-l { width: 90px; }

th, td {
  height: 25px;
  padding: 0 2px 2px;
  border-right: 1px solid #000;
  border-bottom: 1px solid #000;
  white-space: nowrap;
  text-align: left;
}

th {
  padding: 0 0 2px;
  border-color: #b5b5b5;
  background: #e6e6e6;
  font-weight: 300;
  text-align: center;
}

tbody th:first-child {
  border-right-color: #9f9f9f;
}

thead th {
  border-bottom-color: #9f9f9f;
}

.corner {
  text-align: right;
  line-height: 0;
  padding: 3px 3px 0 0;
}

th.picked {
  background: #d2d2d2;
  color: #217346;
}

thead th.picked {
  padding-bottom: 1px;
  border-bottom: 2px solid #217346;
}

tbody th.picked:first-child {
  border-right: 2px solid #217346;
}

.plain td {
  border-color: #d4d4d4;
}

.plain.last td {
  border-bottom-color: #000;
}

td:nth-child(2), td:nth-child(13) {
  text-align: right;
}

td.title {
  padding-left: 3px;
  font-weight: bold;
  text-align: left;
}

.heads td {
  height: 27px;
  border-bottom: 3px double #000;
  background: #305496;
  color: #fff;
  font-weight: bold;
  text-align: center;
}

td a {
  color: #0563c1;
  text-decoration: underline;
  text-decoration-skip-ink: none;
  text-underline-offset: 3px;
}

.selected, .noted {
  position: relative;
}

.frame {
  position: absolute;
  inset: -4px -3px -4px -4px;
  border: 6px solid #fe0000;
  border-width: 6px 7px;
  border-radius: 4px;
}

.badge {
  position: absolute;
  left: 20px;
  top: -8px;
  width: 34px;
  height: 34px;
  border: 2px solid #e60012;
  border-radius: 50%;
  background: rgba(255, 255, 255, 0.5);
  box-shadow: 0 0 0 3px #fff, 2px 3px 5px 3px rgba(0, 0, 0, 0.35);
  color: #e60012;
  font-family: Inter, "Liberation Sans", sans-serif;
  font-weight: 900;
  font-size: 24px;
  line-height: 30px;
  text-align: center;
}

/* scroll bars */
.vscroll {
  width: 21px;
  display: flex;
  flex-direction: column;
  padding: 2px 2px 0 3px;
}

.vscroll button, .hscroll button, .thumb {
  flex: none;
  border: 1px solid #ababab;
  background: #fff;
}

.vscroll button {
  width: 15px;
  height: 15px;
}

.vscroll button:last-child {
  margin-top: auto;
}

.vscroll .thumb {
  width: 15px;
  height: 40%;
  margin-top: -1px;
}

.sheet-tabs {
  flex: none;
  height: 29px;
  display: flex;
  align-items: flex-start;
  border-bottom: 1px solid #c6c6c6;
}

.nav {
  display: flex;
  align-items: center;
  justify-content: center;
  gap: 23px;
  width: 100px;
  height: 26px;
  padding-right: 14px;
}

.sheet-tab {
  height: 25px;
  padding: 0 13px;
  border-right: 1px solid #9f9f9f;
  border-bottom: 2px solid #217346;
  background: #fff;
  color: #217346;
  line-height: 24px;
}

.add {
  margin: 5px 0 0 33px;
}

.sheet-tabs .grip {
  height: 26px;
  margin-left: auto;
}

.hscroll {
  width: 509px;
  display: flex;
  justify-content: space-between;
  margin: 7px 21px 0 1px;
  background: #dadada;
}

.hscroll button {
  width: 15px;
  height: 15px;
}

.hscroll .thumb {
  width: 369px;
  margin: 0 auto 0 -1px;
}

/* status bar */
.status {
  flex: none;
  height: 21px;
  display: flex;
  align-items: center;
  padding-left: 8px;
  background: #f3f2f1;
}

.macro {
  margin-left: 19px;
}

.views {
  display: flex;
  margin-left: auto;
}

.views button {
  width: 40px;
  height: 21px;
}

.views .on {
  background: #c8c6c4;
}

.zoom {
  display: flex;
  align-items: center;
  gap: 5px;
  padding: 0 8px 0 5px;
}

.zoom span {
  margin-left: 9px;
}

.zoom input {
  appearance: none;
  width: 100px;
  height: 12px;
  margin: 0;
  background: linear-gradient(#a6a6a6, #a6a6a6) center / 100% 1px no-repeat;
}

.zoom input::-webkit-slider-thumb {
  appearance: none;
  width: 5px;
  height: 11px;
  background: #6b6966;
}
```
